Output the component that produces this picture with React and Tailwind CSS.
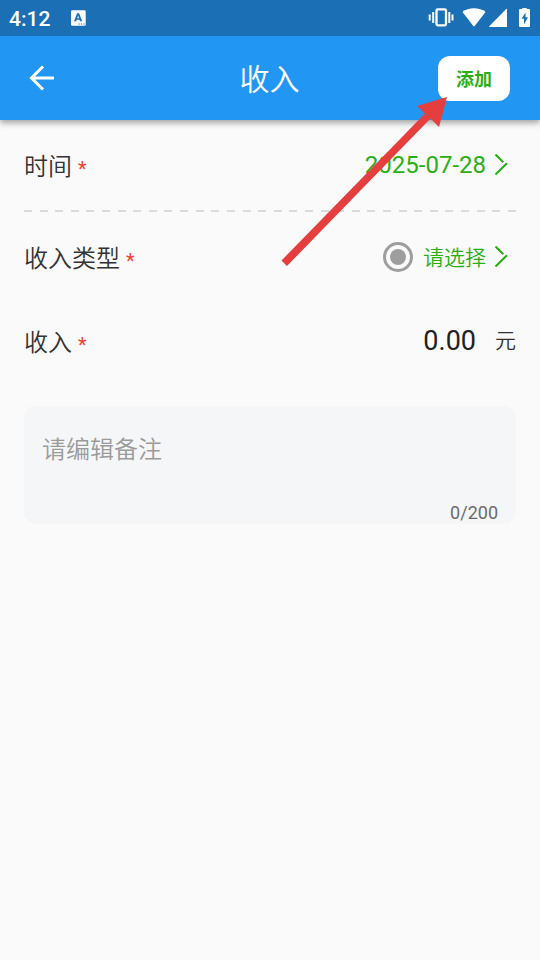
import React, { useState } from "react";

const Chevron = () => (
  <svg viewBox="0 0 14 22" className="h-[22px] w-3.5" fill="none" stroke="currentColor" strokeWidth="2.1">
    <path d="M1.500 0.500 L9.300 8.300 M13 9.300 L1.500 20.500" />
  </svg>
);

const StatusBar = () => (
  <div className="flex h-9 items-center bg-[#1a6fb5] pl-[9px] pr-2.5 text-white">
    <span className="pt-0.5 text-[21px] leading-6 font-medium">4:12</span>
    <svg viewBox="0 0 16 16" className="ml-5 h-4 w-4">
      <rect x="1" y="0.3" width="14.7" height="15.5" rx="1.3" fill="#fff" />
      <path
        d="M4 11.3 L7.1 3.3 H9.1 L12.2 11.3 H10 L9.500 9.800 H6.700 L6.200 11.300 Z M7.200 8.200 H9 L8.100 5.500 Z"
        fill="#1a6fb5"
        fillRule="evenodd"
      />
      <path d="M8.500 14 H9.700 M10.900 14 H12.100 M13.300 14 H14.500" stroke="#1a6fb5" strokeWidth="1.2" />
    </svg>

    <svg viewBox="0 0 26 20" className="ml-auto h-5 w-[26px]" fill="none" stroke="#fff">
      <rect x="8.500" y="1.300" width="9.500" height="16" rx="1.2" strokeWidth="2.3" />
      <path d="M5.200 4 V15 M21.300 4 V15" strokeWidth="2" />
      <path d="M1.700 6.500 V12.500 M24.500 6.500 V12.500" strokeWidth="2" />
    </svg>
    <svg viewBox="0 0 24 20" className="ml-2 h-5 w-6" fill="#fff">
      <path d="M0.500 4 C6 -1 18 -1 23.500 4 L12.700 18 Q12 18.800 11.300 18 Z" />
    </svg>
    <svg viewBox="0 0 20 20" className="ml-0.5 h-5 w-5" fill="#fff">
      <path d="M19 1.400 V19 H1.500 Q0.500 19 1.200 18.200 L18 1.300 Q19 0.400 19 1.400 Z" />
    </svg>
    <svg viewBox="0 0 12 20" className="ml-2.5 h-5 w-3">
      <path
        d="M4.300 -1 H8.700 V1 H11 Q12 1 12 2 V18 Q12 19 11 19 H2 Q1 19 1 18 V2 Q1 1 2 1 H4.300 Z"
        fill="#fff"
      />
      <path d="M7.500 4.500 L3.500 10.800 H6 V16.500 L10 9.300 H7.500 Z" fill="#1a6fb5" />
    </svg>
  </div>
);

const FieldLabel = ({ htmlFor, children }) => (
  <label htmlFor={htmlFor} className="flex items-center gap-1.5 pt-1 text-2xl text-[#333333]">
    <span className="font-[350]">{children}</span>
    <span className="pt-1 text-xl leading-5 text-[#f44336]">*</span>
  </label>
);

const App = () => {
  const [amount, setAmount] = useState("0.00");
  const [note, setNote] = useState("");

  return (
    <div className="relative min-h-screen bg-[#fafafa] font-[Roboto,'Noto_Sans_CJK_SC',sans-serif]">
      <header className="shadow-[0_3px_6px_rgba(0,0,0,0.35)]">
        <StatusBar />
        <div className="grid h-[84px] grid-cols-[1fr_auto_1fr] items-center bg-[#2196f3] pr-[30px] pl-[29px] text-white">
          <button type="button" aria-label="返回" className="justify-self-start">
            <svg viewBox="0 0 26 26" className="h-[26px] w-[26px]" fill="none" stroke="currentColor" strokeWidth="3">
              <path d="M25 13 H3 M14 1.500 L2.500 13 L14 24.500" />
            </svg>
          </button>
          <h1 className="pt-1 text-3xl font-[350]">收入</h1>
          <button
            type="button"
            className="h-[45px] w-[72px] justify-self-end rounded-xl bg-white pt-1 text-lg font-bold text-[#2aae16]"
          >
            添加
          </button>
        </div>
      </header>

      <form className="px-6" onSubmit={(e) => e.preventDefault()}>
        <div className="flex h-[90px] items-center justify-between">
          <FieldLabel htmlFor="date">时间</FieldLabel>
          <button id="date" type="button" className="flex items-center gap-2 pr-2 text-2xl text-[#2aae16]">
            2025-07-28
            <Chevron />
          </button>
        </div>

        <div className="flex h-0.5 justify-between">
          {Array.from({ length: 32 }, (_, i) => (
            <span key={i} className="w-2 bg-[#dadada]" />
          ))}
        </div>

        <div className="flex h-[90px] items-center justify-between">
          <FieldLabel htmlFor="type">收入类型</FieldLabel>
          <div className="flex items-center gap-2.5 pr-2 text-[#2aae16]">
            <input
              type="radio"
              aria-label="收入类型"
              defaultChecked
              className="h-[30px] w-[30px] appearance-none rounded-full border-[3px] border-[#9e9e9e] bg-[#9e9e9e] bg-clip-content p-1"
            />
            <button id="type" type="button" className="flex items-center gap-2 text-[21px] font-[350]">
              <span className="pt-1">请选择</span>
              <Chevron />
            </button>
          </div>
        </div>

        <div className="flex h-[78px] items-center">
          <FieldLabel htmlFor="amount">收入</FieldLabel>
          <input
            id="amount"
            type="text"
            inputMode="decimal"
            value={amount}
            onChange={(e) => setAmount(e.target.value)}
            className="min-w-0 flex-1 bg-transparent text-right text-[27px] text-[#212121] outline-none"
          />
          <span className="ml-[19px] pt-0.5 text-[21px] font-[350] text-[#333333]">元</span>
        </div>

        <div className="mt-[26px] flex h-[118px] flex-col rounded-xl bg-[#f4f6f8] px-[18px] pt-[26px]">
          <textarea
            aria-label="备注"
            maxLength={200}
            value={note}
            onChange={(e) => setNote(e.target.value)}
            placeholder="请编辑备注"
            className="min-h-0 w-full flex-1 resize-none bg-transparent text-2xl leading-9 font-[350] text-[#333333] outline-none placeholder:text-[#9b9b9b]"
          />
          <span className="text-right text-lg leading-[22px] text-[#6b6b6b]">{note.length}/200</span>
        </div>
      </form>

      {/* pointer to the add button */}
      <svg
        viewBox="0 0 166 170"
        className="pointer-events-none absolute top-[97px] right-[93px] h-[170px] w-[166px]"
        fill="#e53e3e"
      >
        <path d="M166 0 L158 30 L149.500 21.500 L6 169 L0.500 163.500 L144 16.500 L136 9 Z" />
      </svg>
    </div>
  );
};

export default App;
